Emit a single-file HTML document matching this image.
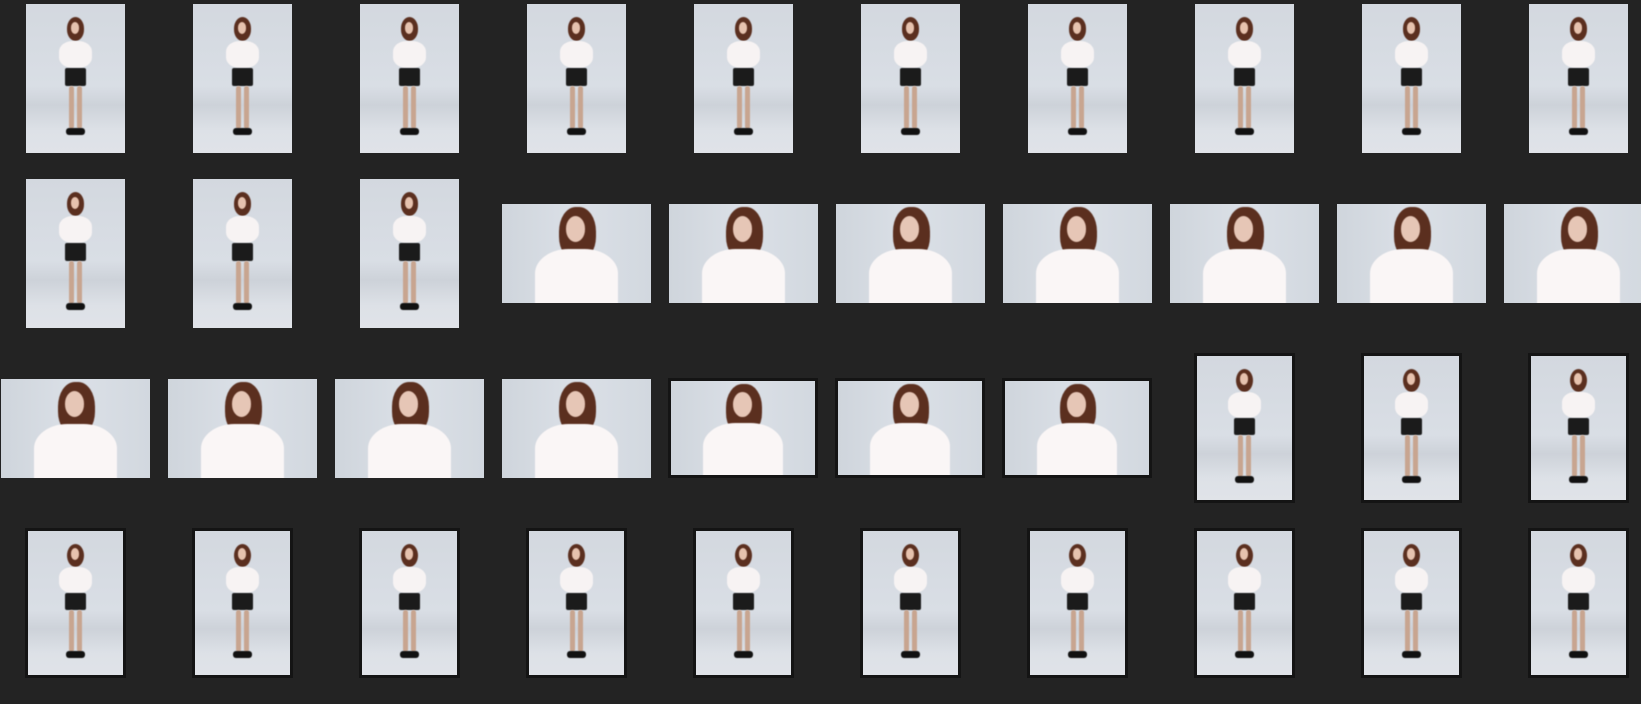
<!DOCTYPE html>
<html><head><meta charset="utf-8"><style>
*{margin:0;padding:0;box-sizing:border-box}
body{width:1641px;height:704px;background:#232323;position:relative;overflow:hidden;font-family:"Liberation Sans",sans-serif}
.t{position:absolute;overflow:hidden;background:linear-gradient(#d3d8df 0%,#d9dee5 55%,#cdd2d9 68%,#dde1e7 85%,#e0e3e8 100%)}
.b{border:3px solid #141414}
.p{width:99px;height:149px}
.p.b{width:101px;height:150px}
.l{width:149px;height:99px;background:linear-gradient(90deg,#cfd5dc,#dbe0e7 50%,#d2d8df)}
.l.b{width:150px;height:100px}
.t i{position:absolute;display:block;filter:blur(0.6px)}
.p .h{left:41%;top:9%;width:18%;height:16%;background:#5b2f1f;border-radius:50%}
.p .f{left:45%;top:12%;width:9%;height:8%;background:#e6c2ae;border-radius:50%}
.p .w{left:33%;top:25%;width:34%;height:18%;background:#f7f3f3;border-radius:40%}
.p .s{left:39%;top:43%;width:22%;height:12%;background:#1b1b1b;border-radius:2px}
.p .g1{left:43%;top:55%;width:5%;height:29%;background:#c8a590;border-radius:3px}
.p .g2{left:52%;top:55%;width:5%;height:29%;background:#c8a590;border-radius:3px}
.p .k{left:40%;top:83%;width:20%;height:5%;background:#111;border-radius:3px}
.l .h{left:38%;top:3%;width:25%;height:55%;background:#5b2f1f;border-radius:45%}
.l .f{left:43%;top:12%;width:13%;height:26%;background:#e6c6b6;border-radius:50%}
.l .w{left:22%;top:45%;width:56%;height:62%;background:#faf6f6;border-radius:40% 40% 0 0}
</style></head><body>
<!-- row 1 -->
<div class="t p" style="left:26px;top:4px"><i class="h"></i><i class="f"></i><i class="w"></i><i class="s"></i><i class="g1"></i><i class="g2"></i><i class="k"></i></div>
<div class="t p" style="left:193px;top:4px"><i class="h"></i><i class="f"></i><i class="w"></i><i class="s"></i><i class="g1"></i><i class="g2"></i><i class="k"></i></div>
<div class="t p" style="left:360px;top:4px"><i class="h"></i><i class="f"></i><i class="w"></i><i class="s"></i><i class="g1"></i><i class="g2"></i><i class="k"></i></div>
<div class="t p" style="left:527px;top:4px"><i class="h"></i><i class="f"></i><i class="w"></i><i class="s"></i><i class="g1"></i><i class="g2"></i><i class="k"></i></div>
<div class="t p" style="left:694px;top:4px"><i class="h"></i><i class="f"></i><i class="w"></i><i class="s"></i><i class="g1"></i><i class="g2"></i><i class="k"></i></div>
<div class="t p" style="left:861px;top:4px"><i class="h"></i><i class="f"></i><i class="w"></i><i class="s"></i><i class="g1"></i><i class="g2"></i><i class="k"></i></div>
<div class="t p" style="left:1028px;top:4px"><i class="h"></i><i class="f"></i><i class="w"></i><i class="s"></i><i class="g1"></i><i class="g2"></i><i class="k"></i></div>
<div class="t p" style="left:1195px;top:4px"><i class="h"></i><i class="f"></i><i class="w"></i><i class="s"></i><i class="g1"></i><i class="g2"></i><i class="k"></i></div>
<div class="t p" style="left:1362px;top:4px"><i class="h"></i><i class="f"></i><i class="w"></i><i class="s"></i><i class="g1"></i><i class="g2"></i><i class="k"></i></div>
<div class="t p" style="left:1529px;top:4px"><i class="h"></i><i class="f"></i><i class="w"></i><i class="s"></i><i class="g1"></i><i class="g2"></i><i class="k"></i></div>
<!-- row 2 -->
<div class="t p" style="left:26px;top:179px"><i class="h"></i><i class="f"></i><i class="w"></i><i class="s"></i><i class="g1"></i><i class="g2"></i><i class="k"></i></div>
<div class="t p" style="left:193px;top:179px"><i class="h"></i><i class="f"></i><i class="w"></i><i class="s"></i><i class="g1"></i><i class="g2"></i><i class="k"></i></div>
<div class="t p" style="left:360px;top:179px"><i class="h"></i><i class="f"></i><i class="w"></i><i class="s"></i><i class="g1"></i><i class="g2"></i><i class="k"></i></div>
<div class="t l" style="left:502px;top:204px"><i class="h"></i><i class="f"></i><i class="w"></i></div>
<div class="t l" style="left:669px;top:204px"><i class="h"></i><i class="f"></i><i class="w"></i></div>
<div class="t l" style="left:836px;top:204px"><i class="h"></i><i class="f"></i><i class="w"></i></div>
<div class="t l" style="left:1003px;top:204px"><i class="h"></i><i class="f"></i><i class="w"></i></div>
<div class="t l" style="left:1170px;top:204px"><i class="h"></i><i class="f"></i><i class="w"></i></div>
<div class="t l" style="left:1337px;top:204px"><i class="h"></i><i class="f"></i><i class="w"></i></div>
<div class="t l" style="left:1504px;top:204px"><i class="h"></i><i class="f"></i><i class="w"></i></div>
<!-- row 3 -->
<div class="t l" style="left:1px;top:379px"><i class="h"></i><i class="f"></i><i class="w"></i></div>
<div class="t l" style="left:168px;top:379px"><i class="h"></i><i class="f"></i><i class="w"></i></div>
<div class="t l" style="left:335px;top:379px"><i class="h"></i><i class="f"></i><i class="w"></i></div>
<div class="t l" style="left:502px;top:379px"><i class="h"></i><i class="f"></i><i class="w"></i></div>
<div class="t l b" style="left:668px;top:378px"><i class="h"></i><i class="f"></i><i class="w"></i></div>
<div class="t l b" style="left:835px;top:378px"><i class="h"></i><i class="f"></i><i class="w"></i></div>
<div class="t l b" style="left:1002px;top:378px"><i class="h"></i><i class="f"></i><i class="w"></i></div>
<div class="t p b" style="left:1194px;top:353px"><i class="h"></i><i class="f"></i><i class="w"></i><i class="s"></i><i class="g1"></i><i class="g2"></i><i class="k"></i></div>
<div class="t p b" style="left:1361px;top:353px"><i class="h"></i><i class="f"></i><i class="w"></i><i class="s"></i><i class="g1"></i><i class="g2"></i><i class="k"></i></div>
<div class="t p b" style="left:1528px;top:353px"><i class="h"></i><i class="f"></i><i class="w"></i><i class="s"></i><i class="g1"></i><i class="g2"></i><i class="k"></i></div>
<!-- row 4 -->
<div class="t p b" style="left:25px;top:528px"><i class="h"></i><i class="f"></i><i class="w"></i><i class="s"></i><i class="g1"></i><i class="g2"></i><i class="k"></i></div>
<div class="t p b" style="left:192px;top:528px"><i class="h"></i><i class="f"></i><i class="w"></i><i class="s"></i><i class="g1"></i><i class="g2"></i><i class="k"></i></div>
<div class="t p b" style="left:359px;top:528px"><i class="h"></i><i class="f"></i><i class="w"></i><i class="s"></i><i class="g1"></i><i class="g2"></i><i class="k"></i></div>
<div class="t p b" style="left:526px;top:528px"><i class="h"></i><i class="f"></i><i class="w"></i><i class="s"></i><i class="g1"></i><i class="g2"></i><i class="k"></i></div>
<div class="t p b" style="left:693px;top:528px"><i class="h"></i><i class="f"></i><i class="w"></i><i class="s"></i><i class="g1"></i><i class="g2"></i><i class="k"></i></div>
<div class="t p b" style="left:860px;top:528px"><i class="h"></i><i class="f"></i><i class="w"></i><i class="s"></i><i class="g1"></i><i class="g2"></i><i class="k"></i></div>
<div class="t p b" style="left:1027px;top:528px"><i class="h"></i><i class="f"></i><i class="w"></i><i class="s"></i><i class="g1"></i><i class="g2"></i><i class="k"></i></div>
<div class="t p b" style="left:1194px;top:528px"><i class="h"></i><i class="f"></i><i class="w"></i><i class="s"></i><i class="g1"></i><i class="g2"></i><i class="k"></i></div>
<div class="t p b" style="left:1361px;top:528px"><i class="h"></i><i class="f"></i><i class="w"></i><i class="s"></i><i class="g1"></i><i class="g2"></i><i class="k"></i></div>
<div class="t p b" style="left:1528px;top:528px"><i class="h"></i><i class="f"></i><i class="w"></i><i class="s"></i><i class="g1"></i><i class="g2"></i><i class="k"></i></div>
</body></html>
